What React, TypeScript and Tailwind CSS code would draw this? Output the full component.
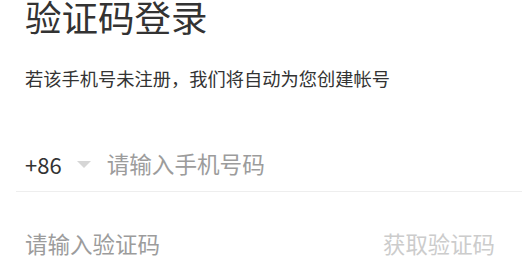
export default function App() {
  return (
    <div className="min-h-screen bg-white pl-4 pr-[5px] font-['Noto_Sans_CJK_SC','Noto_Sans',sans-serif] text-[#333]">
      <h1 className="pl-[9px] text-[36.5px] leading-[34px] font-normal">验证码登录</h1>
      <p className="mt-[32px] pl-[9px] text-[18.25px] leading-[24px]">
        若该手机号未注册，我们将自动为您创建帐号
      </p>

      <div className="mt-[47px] flex h-[55px] items-center border-b border-[#eee] pl-[9px]">
        <span className="text-[22px] leading-[30px] text-[#333]">+86</span>
        <span className="ml-[15px] h-0 w-0 border-x-[7px] border-t-[7px] border-x-transparent border-t-[#d6d6d6]" />
        <input
          className="ml-[16px] min-w-0 flex-1 bg-transparent text-[22.6px] leading-[30px] outline-none placeholder:text-[#9c9c9c]"
          placeholder="请输入手机号码"
        />
      </div>

      <div className="flex items-center pt-[36px] pl-[9px] pr-[27px]">
        <input
          className="min-w-0 flex-1 bg-transparent text-[22.5px] leading-[30px] outline-none placeholder:text-[#9c9c9c]"
          placeholder="请输入验证码"
        />
        <button className="text-[22.4px] leading-[30px] text-[#ccc]">获取验证码</button>
      </div>
    </div>
  );
}
